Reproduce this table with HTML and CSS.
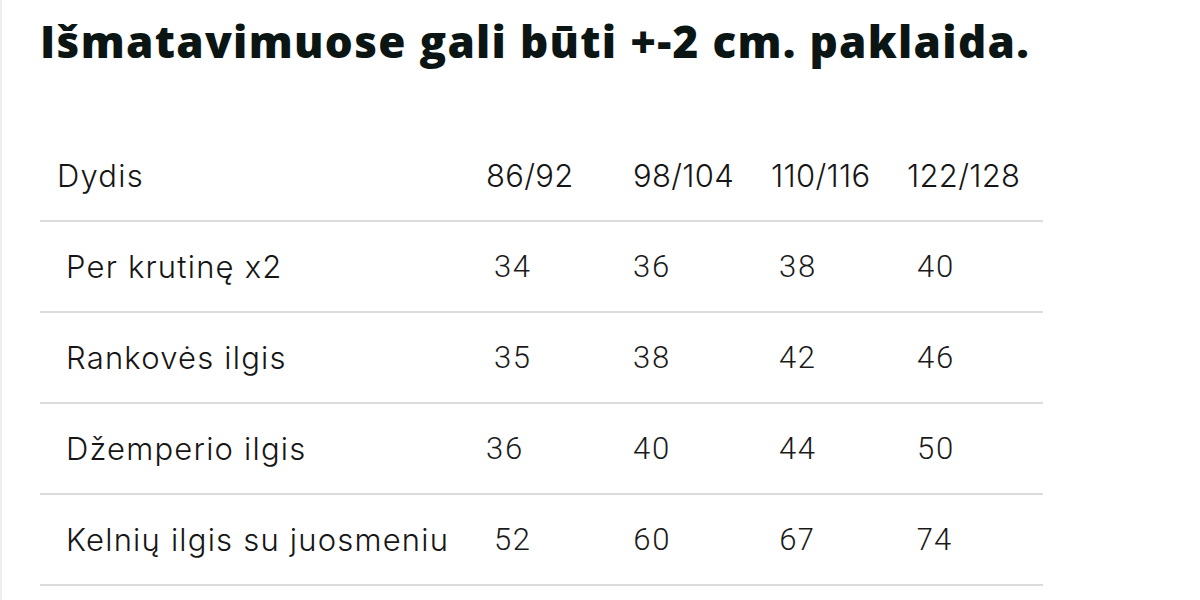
FILE: index.html
```html
<!DOCTYPE html>
<html lang="lt">
<head>
<meta charset="utf-8">
<title>Išmatavimai</title>
<link rel="stylesheet" href="styles.css">
</head>
<body>
<div class="page">
  <h1 class="title">Išmatavimuose gali būti +-2 cm. paklaida.</h1>
  <div class="size-table">
    <div class="row head">
      <div class="cell label">Dydis</div>
      <div class="cell size">86/92</div>
      <div class="cell size">98/104</div>
      <div class="cell size">110/116</div>
      <div class="cell size">122/128</div>
    </div>
    <div class="row">
      <div class="cell label">Per krutinę x2</div>
      <div class="cell num c2">34</div>
      <div class="cell num c3">36</div>
      <div class="cell num c4">38</div>
      <div class="cell num c5">40</div>
    </div>
    <div class="row">
      <div class="cell label">Rankovės ilgis</div>
      <div class="cell num c2">35</div>
      <div class="cell num c3">38</div>
      <div class="cell num c4">42</div>
      <div class="cell num c5">46</div>
    </div>
    <div class="row">
      <div class="cell label">Džemperio ilgis</div>
      <div class="cell num">36</div>
      <div class="cell num c3">40</div>
      <div class="cell num c4">44</div>
      <div class="cell num c5">50</div>
    </div>
    <div class="row">
      <div class="cell label">Kelnių ilgis su juosmeniu</div>
      <div class="cell num c2">52</div>
      <div class="cell num c3">60</div>
      <div class="cell num c4">67</div>
      <div class="cell num c5">74</div>
    </div>
  </div>
</div>
</body>
</html>
```
FILE: styles.css
```css
html, body {
  margin: 0;
  padding: 0;
  background: #ffffff;
}

.page {
  width: 1200px;
  height: 600px;
  box-sizing: border-box;
  border-left: 2px solid #eeeeee;
  padding-left: 38px;
  overflow: hidden;
}

.title {
  margin: 0;
  padding-top: 11px;
  font-family: "Open Sans", "Liberation Sans", sans-serif;
  font-weight: 800;
  font-size: 44px;
  line-height: 60px;
  letter-spacing: 1.3px;
  color: #0b1514;
  white-space: nowrap;
}

.size-table {
  margin-top: 60px;
  width: 1003px;
}

.row {
  display: grid;
  grid-template-columns: 446px 147px 138px 136px 136px;
  height: 89px;
  align-items: center;
  border-bottom: 2px solid #dcdcdc;
}

.cell {
  font-family: Inter, "Open Sans", sans-serif;
  font-weight: 300;
  font-size: 31px;
  letter-spacing: 1.2px;
  font-variant-numeric: proportional-nums;
  color: #161616;
  white-space: nowrap;
}

.size {
  letter-spacing: 0.3px;
}

.head .label {
  padding-left: 17px;
}

.label {
  padding-left: 26px;
}

.num {
  font-family: Roboto, "Liberation Sans", sans-serif;
  font-weight: 300;
  font-size: 31px;
  letter-spacing: 1.5px;
  color: #1a1a1a;
}

.c2 { padding-left: 8px; }
.c3 { padding-left: 0; }
.c4 { padding-left: 8px; }
.c5 { padding-left: 10px; }
```
